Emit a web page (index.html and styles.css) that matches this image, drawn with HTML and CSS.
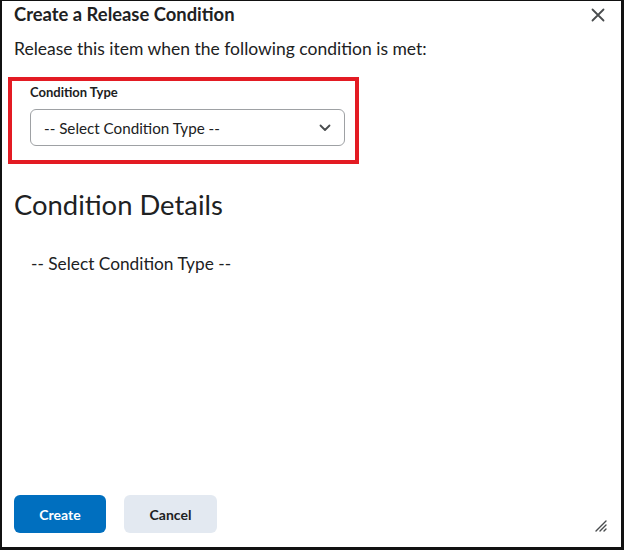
FILE: index.html
```html
<!DOCTYPE html>
<html>
<head>
<meta charset="utf-8">
<link rel="stylesheet" href="styles.css">
</head>
<body>
<div class="dialog">
  <div class="header">
    <h1 class="title">Create a Release Condition</h1>
    <span class="close" aria-label="Close">
      <svg width="14" height="14" viewBox="0 0 14 14"><path d="M1.5 1.5 L12.5 12.5 M12.5 1.5 L1.5 12.5" stroke="#494c4e" stroke-width="1.8" fill="none" stroke-linecap="round"/></svg>
    </span>
  </div>
  <p class="intro">Release this item when the following condition is met:</p>
  <div class="highlight">
    <label class="label">Condition Type</label>
    <div class="select">
      <span class="select-text">-- Select Condition Type --</span>
      <svg class="chev" width="12" height="8" viewBox="0 0 12 8"><path d="M1.5 1.5 L6 6 L10.5 1.5" stroke="#494c4e" stroke-width="1.8" fill="none" stroke-linecap="round" stroke-linejoin="round"/></svg>
    </div>
  </div>
  <h2 class="details">Condition Details</h2>
  <p class="placeholder">-- Select Condition Type --</p>
  <div class="spacer"></div>
  <div class="footer">
    <button class="btn primary">Create</button>
    <button class="btn secondary">Cancel</button>
    <svg class="grip" width="12" height="12" viewBox="0 0 12 12"><path d="M1 11 L11 1 M5 11 L11 5 M9 11 L11 9" stroke="#494c4e" stroke-width="1.4" fill="none" stroke-linecap="round"/></svg>
  </div>
</div>
</body>
</html>
```

FILE: styles.css
```css
html, body {
  margin: 0;
  padding: 0;
  background: #fff;
}
body {
  font-family: Lato, "Noto Sans", sans-serif;
  color: #202122;
}
.dialog {
  box-sizing: border-box;
  width: 624px;
  height: 550px;
  border-style: solid;
  border-color: #111;
  border-width: 1px 3px 3px 2px;
  display: flex;
  flex-direction: column;
  padding: 0 0 0 12px;
  position: relative;
}
.header {
  display: flex;
  justify-content: space-between;
  align-items: center;
  height: 27px;
  padding-right: 12px;
}
.title {
  margin: 0;
  font-size: 18.4px;
  font-weight: 700;
  line-height: 27px;
  color: #202122;
}
.close {
  display: flex;
  margin-right: 4px;
}
.intro {
  margin: 8px 0 0 0;
  font-size: 17.5px;
  line-height: 26px;
}
.highlight {
  box-sizing: border-box;
  width: 351px;
  height: 87px;
  border: 4px solid #e31b23;
  margin: 15px 0 0 -6px;
  padding: 3px 0 0 18px;
}
.label {
  display: block;
  font-size: 13px;
  font-weight: 700;
  line-height: 17px;
}
.select {
  box-sizing: border-box;
  width: 315px;
  height: 37px;
  margin-top: 8px;
  border: 1px solid #9ea1a4;
  border-radius: 6px;
  display: flex;
  align-items: center;
  justify-content: space-between;
  padding: 0 13px 0 13px;
}
.select-text {
  font-size: 15.2px;
  color: #202122;
}
.chev {
  display: block;
}
.details {
  margin: 24px 0 0 0;
  font-size: 27.4px;
  font-weight: 400;
  line-height: 34px;
}
.placeholder {
  margin: 30px 0 0 17px;
  font-size: 17.3px;
  line-height: 24px;
}
.spacer {
  flex: 1;
}
.footer {
  display: flex;
  align-items: center;
  gap: 18px;
  height: 38px;
  margin-bottom: 14px;
  padding-right: 14px;
}
.btn {
  box-sizing: border-box;
  height: 38px;
  border: none;
  border-radius: 6px;
  font-family: Lato, "Noto Sans", sans-serif;
  font-size: 14px;
  font-weight: 700;
  padding: 0;
}
.primary {
  width: 92px;
  background: #006fbf;
  color: #fff;
}
.secondary {
  width: 93px;
  background: #e3e9f1;
  color: #202122;
}
.grip {
  margin-left: auto;
  margin-top: 24px;
}
```
